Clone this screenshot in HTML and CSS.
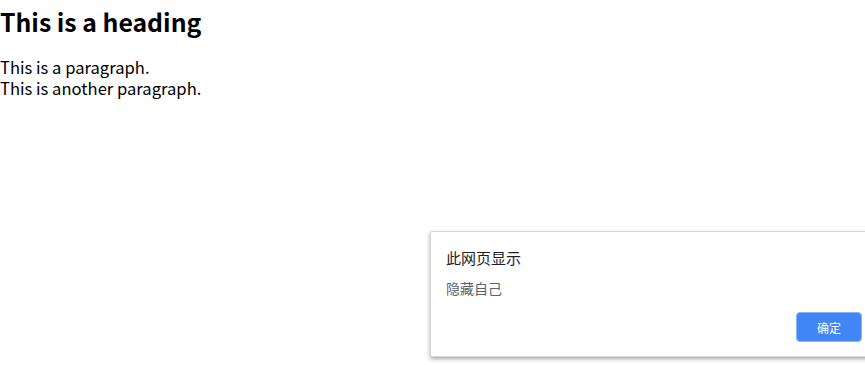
FILE: index.html
```html
<!DOCTYPE html>
<html lang="en">
<head>
<meta charset="utf-8">
<title>Page</title>
<link rel="stylesheet" href="styles.css">
</head>
<body>
<h2 class="heading">This is a heading</h2>
<div class="lines">
  <p class="line">This is a paragraph.</p>
  <p class="line">This is another paragraph.</p>
</div>
<div class="dialog">
  <div class="dialog-title">此网页显示</div>
  <div class="dialog-msg">隐藏自己</div>
  <div class="dialog-actions">
    <button class="btn-ok">确定</button>
  </div>
</div>
</body>
</html>
```
FILE: styles.css
```css
html, body {
  margin: 0;
  padding: 0;
  background: #ffffff;
}
body {
  font-family: "Noto Sans CJK SC", "Noto Sans", sans-serif;
  color: #000;
  width: 865px;
  height: 365px;
  overflow: hidden;
  position: relative;
}
.heading {
  font-size: 24.8px;
  font-weight: bold;
  margin: 0;
  padding-top: 3px;
  line-height: 36px;
}
.lines {
  margin-top: 18px;
}
.line {
  margin: 0;
  font-size: 16.6px;
  line-height: 21px;
}
.dialog {
  position: absolute;
  left: 430px;
  top: 231px;
  width: 448px;
  height: 126px;
  box-sizing: border-box;
  background: #fff;
  border: 1px solid #d6d6d6;
  border-radius: 2px;
  box-shadow: 0 2px 4px rgba(0,0,0,0.35);
  padding: 15px 16px 0 15px;
  display: flex;
  flex-direction: column;
}
.dialog-title {
  font-size: 15px;
  color: #202124;
  line-height: 22px;
}
.dialog-msg {
  font-size: 14px;
  color: #5f6368;
  line-height: 20px;
  margin-top: 9px;
}
.dialog-actions {
  display: flex;
  justify-content: flex-end;
  margin-top: 14px;
}
.btn-ok {
  width: 66px;
  height: 30px;
  box-sizing: border-box;
  background: #4285f4;
  color: #fff;
  border: 1px solid #8ab4f8;
  border-radius: 4px;
  font-family: "Noto Sans CJK SC", sans-serif;
  font-size: 12px;
  padding: 0;
  margin-right: -1px;
}
```
